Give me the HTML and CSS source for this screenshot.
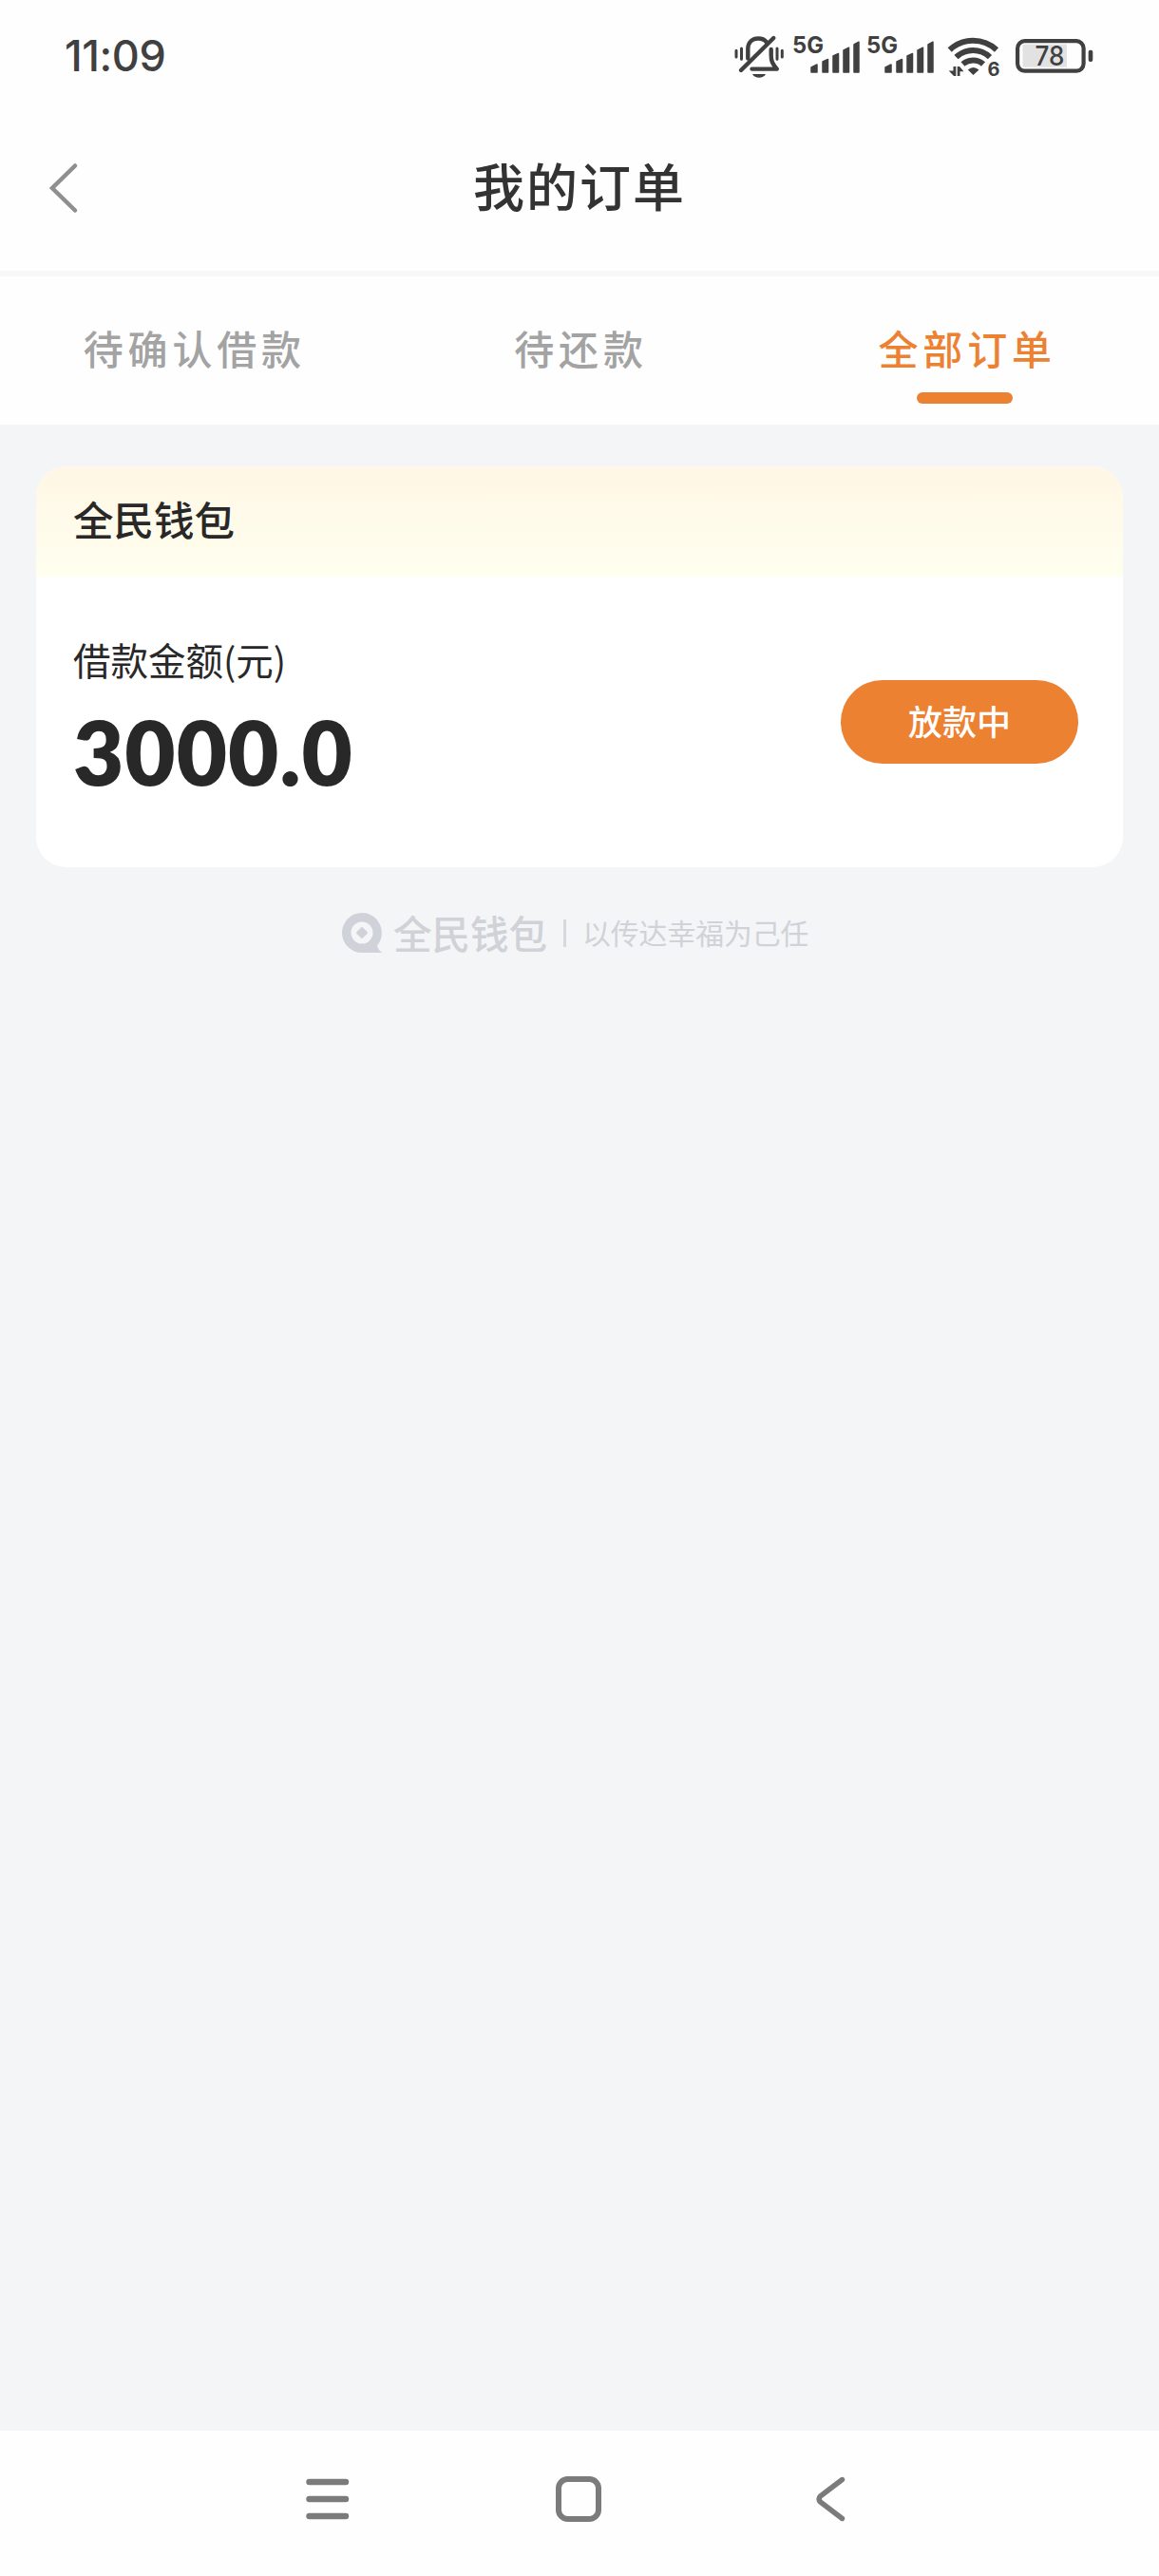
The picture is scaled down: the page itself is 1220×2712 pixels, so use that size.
FILE: index.html
```html
<!DOCTYPE html>
<html lang="zh-CN">
<head>
    <meta charset="UTF-8">
    <meta name="viewport" content="width=device-width, initial-scale=1.0">
    <title>我的订单</title>
    <link rel="stylesheet" href="styles.css">
</head>
<body>
    <div class="status-bar">
        <span class="time">11:09</span>
        <div class="status-icons">
            <svg class="bell" width="53" height="50" viewBox="0 0 53 50">
                <g fill="none" stroke="#404040" stroke-width="4.4" stroke-linecap="round" stroke-linejoin="round">
                    <path d="M14.3 25.5V15.5C14.3 8.5 19 4.5 25.3 4.5C29 4.5 31.8 5.8 33.6 8"/>
                    <path d="M38.7 16V22C38.7 28.5 40 31 44.8 36.6H18.5"/>
                    <path d="M7 38L41.3 4"/>
                    <path stroke-width="3" d="M2 17.3V24M7.5 15V26.3M45 15V26.3M50.3 17.3V24"/>
                </g>
                <path fill="#404040" d="M19 42H33C30.500 47 21.500 47 19 42Z"/>
            </svg>
            <svg class="signal" width="70" height="50" viewBox="0 0 70 50">
                <text class="net" x="-1" y="19.700" textLength="33" lengthAdjust="spacingAndGlyphs">5G</text>
                <path class="bars" d="M19 35L25 32V40H19ZM31 29L36.500 26.500V40H31ZM42 23L47.500 20.500V40H42ZM53 17L58.500 14.200V40H53ZM64 11L69 8.200V40H64Z"/>
            </svg>
            <svg class="signal" width="70" height="50" viewBox="0 0 70 50">
                <text class="net" x="-1" y="19.700" textLength="33" lengthAdjust="spacingAndGlyphs">5G</text>
                <path class="bars" d="M19 35L25 32V40H19ZM31 29L36.500 26.500V40H31ZM42 23L47.500 20.500V40H42ZM53 17L58.500 14.200V40H53ZM64 11L69 8.200V40H64Z"/>
            </svg>
            <svg class="wifi" width="54" height="50" viewBox="0 0 54 50">
                <g fill="none" stroke="#404040" stroke-width="6">
                    <path d="M1.700 16.500Q12 6.700 26.300 6.700T51 16.500"/>
                    <path d="M8.500 24.200Q16 17 26.300 17T44 24.200"/>
                    <path d="M15.500 31.500Q20 27.500 26.300 27.500T37 31.500"/>
                </g>
                <path fill="#404040" d="M5.500 34H8.300V44H6L0.700 38.500H5.500ZM9.700 34H12L16.500 39.300H12.500V44H9.700Z"/>
                <path fill="#404040" d="M20.800 37.500Q26.500 32.500 32.500 37.500L26.500 43Z"/>
                <text class="gen" x="41.500" y="44">6</text>
            </svg>
            <svg class="battery" width="82" height="50" viewBox="0 0 82 50">
                <rect x="7.500" y="10.700" width="46.500" height="24" fill="#e2e2e2"/>
                <rect x="2.100" y="7.200" width="69.500" height="31.400" rx="7.500" fill="none" stroke="#404040" stroke-width="4.200"/>
                <rect x="76.700" y="16.700" width="4.600" height="12.300" rx="2" fill="#404040"/>
                <text class="level" x="20.500" y="33.200" textLength="31" lengthAdjust="spacingAndGlyphs">78</text>
            </svg>
        </div>
    </div>

    <div class="header">
        <svg class="back" width="34" height="56" viewBox="0 0 34 56">
            <path d="M29 4.500L5 28L29 51.500" fill="none" stroke="#8f8f8f" stroke-width="4.500" stroke-linecap="round"/>
        </svg>
        <h1>我的订单</h1>
    </div>

    <div class="tabs">
        <div class="tab">待确认借款</div>
        <div class="tab">待还款</div>
        <div class="tab active">全部订单</div>
    </div>

    <div class="content">
        <div class="card">
            <div class="card-title">全民钱包</div>
            <div class="card-body">
                <div class="loan">
                    <div class="label">借款金额(元)</div>
                    <div class="amount">3000.0</div>
                </div>
                <button class="state">放款中</button>
            </div>
        </div>
        <div class="brand">
            <svg class="logo" width="43" height="43" viewBox="0 0 43 43">
                <path fill="#d0d2da" fill-rule="evenodd" d="M21 0A21 21 0 0 1 37 34.500Q38 39.500 42.500 42H21A21 21 0 0 1 21 0ZM21 9.500A11.500 11.500 0 1 0 21 32.500A11.500 11.500 0 1 0 21 9.500Z"/>
                <path fill="#d0d2da" stroke="#d0d2da" stroke-width="2" stroke-linejoin="round" d="M21 16L26 21L21 26L16 21Z"/>
            </svg>
            <span class="brand-name">全民钱包</span>
            <span class="line"></span>
            <span class="slogan">以传达幸福为己任</span>
        </div>
    </div>

    <div class="nav-bar">
        <svg width="48" height="50" viewBox="0 0 48 50">
            <path d="M5.500 7H44M5.500 25H44M5.500 43H44" fill="none" stroke="#7b7b7b" stroke-width="6.400" stroke-linecap="round"/>
        </svg>
        <svg width="50" height="50" viewBox="0 0 50 50">
            <rect x="4" y="4" width="42" height="42" rx="9.500" fill="none" stroke="#7b7b7b" stroke-width="6"/>
        </svg>
        <svg width="34" height="50" viewBox="0 0 34 50">
            <path d="M29.500 4.500L6.500 22Q3.500 25 6.500 28L29.500 45.500" fill="none" stroke="#7b7b7b" stroke-width="5.400" stroke-linecap="round" stroke-linejoin="round"/>
        </svg>
    </div>
</body>
</html>
```
FILE: styles.css
```css
* {
    box-sizing: border-box;
}

body {
    margin: 0;
    height: 2712px;
    display: flex;
    flex-direction: column;
    background: #f4f5f7;
    color: #282828;
    font-family: "Noto Sans CJK SC", sans-serif;
    overflow: hidden;
}

svg {
    display: block;
    flex-shrink: 0;
    overflow: visible;
}

.status-bar {
    display: flex;
    justify-content: space-between;
    align-items: flex-start;
    height: 112px;
    padding: 36px 69px 0 68px;
    background: #fefefe;
}

.time {
    color: #404040;
    font-family: Inter, sans-serif;
    font-size: 45px;
    font-weight: 500;
    line-height: 46px;
    letter-spacing: -0.4px;
}

.status-icons {
    display: flex;
}

.signal {
    margin-left: 8px;
}

.bell + .signal {
    margin-left: 9px;
}

.wifi {
    margin-left: 15px;
}

.battery {
    margin-left: 17px;
}

.net,
.gen,
.level {
    fill: #404040;
    font-family: Inter, sans-serif;
    font-size: 24px;
    font-weight: 700;
}

.gen {
    font-size: 20px;
}

.level {
    font-size: 28px;
    font-weight: 500;
}

.bars {
    fill: #404040;
    stroke: #404040;
    stroke-width: 1.5;
    stroke-linejoin: round;
}

.header {
    display: grid;
    grid-template-columns: 120px 1fr 120px;
    align-items: center;
    height: 179px;
    padding-bottom: 2px;
    border-bottom: 6px solid #f8f8f8;
    background: #fefefe;
}

.back {
    margin-left: 50px;
}

h1 {
    margin: 0 0 6px;
    color: #333;
    font-size: 54px;
    font-weight: 500;
    line-height: 80px;
    letter-spacing: 2px;
    text-align: center;
}

.tabs {
    display: grid;
    grid-template-columns: repeat(3, 1fr);
    height: 156px;
    background: #fefefe;
}

.tab {
    display: flex;
    flex-direction: column;
    align-items: center;
    padding: 44px 0 0 3px;
    color: #a3a3a3;
    font-size: 42px;
    font-weight: 500;
    line-height: 62px;
    letter-spacing: 4.8px;
}

.tab.active {
    color: #ed8132;
}

.tab.active::after {
    content: "";
    width: 101px;
    height: 12px;
    margin: 16px 5px 0 0;
    border-radius: 6px;
    background: #ed8132;
}

.content {
    flex: 1;
    padding: 44px 38px 0;
}

.card {
    height: 422px;
    border-radius: 32px;
    background: #fff;
    overflow: hidden;
}

.card-title {
    height: 116px;
    padding-left: 39px;
    background: linear-gradient(#fff6e5, #ffffef);
    font-size: 42.5px;
    font-weight: 500;
    line-height: 110px;
}

.card-body {
    display: flex;
    justify-content: space-between;
    align-items: flex-start;
    padding: 57px 47px 0 39px;
}

.label {
    font-size: 39.5px;
    line-height: 60px;
}

.amount {
    margin-top: 13px;
    font-family: Lato, sans-serif;
    font-size: 92px;
    font-weight: 800;
    line-height: 110px;
    letter-spacing: 1px;
}

.state {
    width: 250px;
    height: 88px;
    margin-top: 52px;
    padding: 0 0 4px;
    border: none;
    border-radius: 44px;
    background: #ed8132;
    color: #fff;
    font-family: inherit;
    font-size: 36px;
    font-weight: 500;
}

.brand {
    display: flex;
    align-items: center;
    margin: 48px 0 0 322px;
    height: 43px;
    color: #d0d2d8;
}

.brand-name {
    margin-left: 11px;
    padding-bottom: 2px;
    font-size: 40.5px;
    font-weight: 500;
    line-height: 41px;
}

.line {
    width: 3px;
    height: 29px;
    margin: 0 17px 0 17px;
    background: #d6d8dc;
}

.slogan {
    padding-bottom: 2px;
    font-size: 29.8px;
    line-height: 41px;
}

.nav-bar {
    display: flex;
    height: 153px;
    padding: 47px 0 0 320px;
    background: #fefefe;
}

.nav-bar svg + svg {
    margin-left: 216px;
}

.nav-bar svg:last-child {
    margin-left: 223px;
}
```
